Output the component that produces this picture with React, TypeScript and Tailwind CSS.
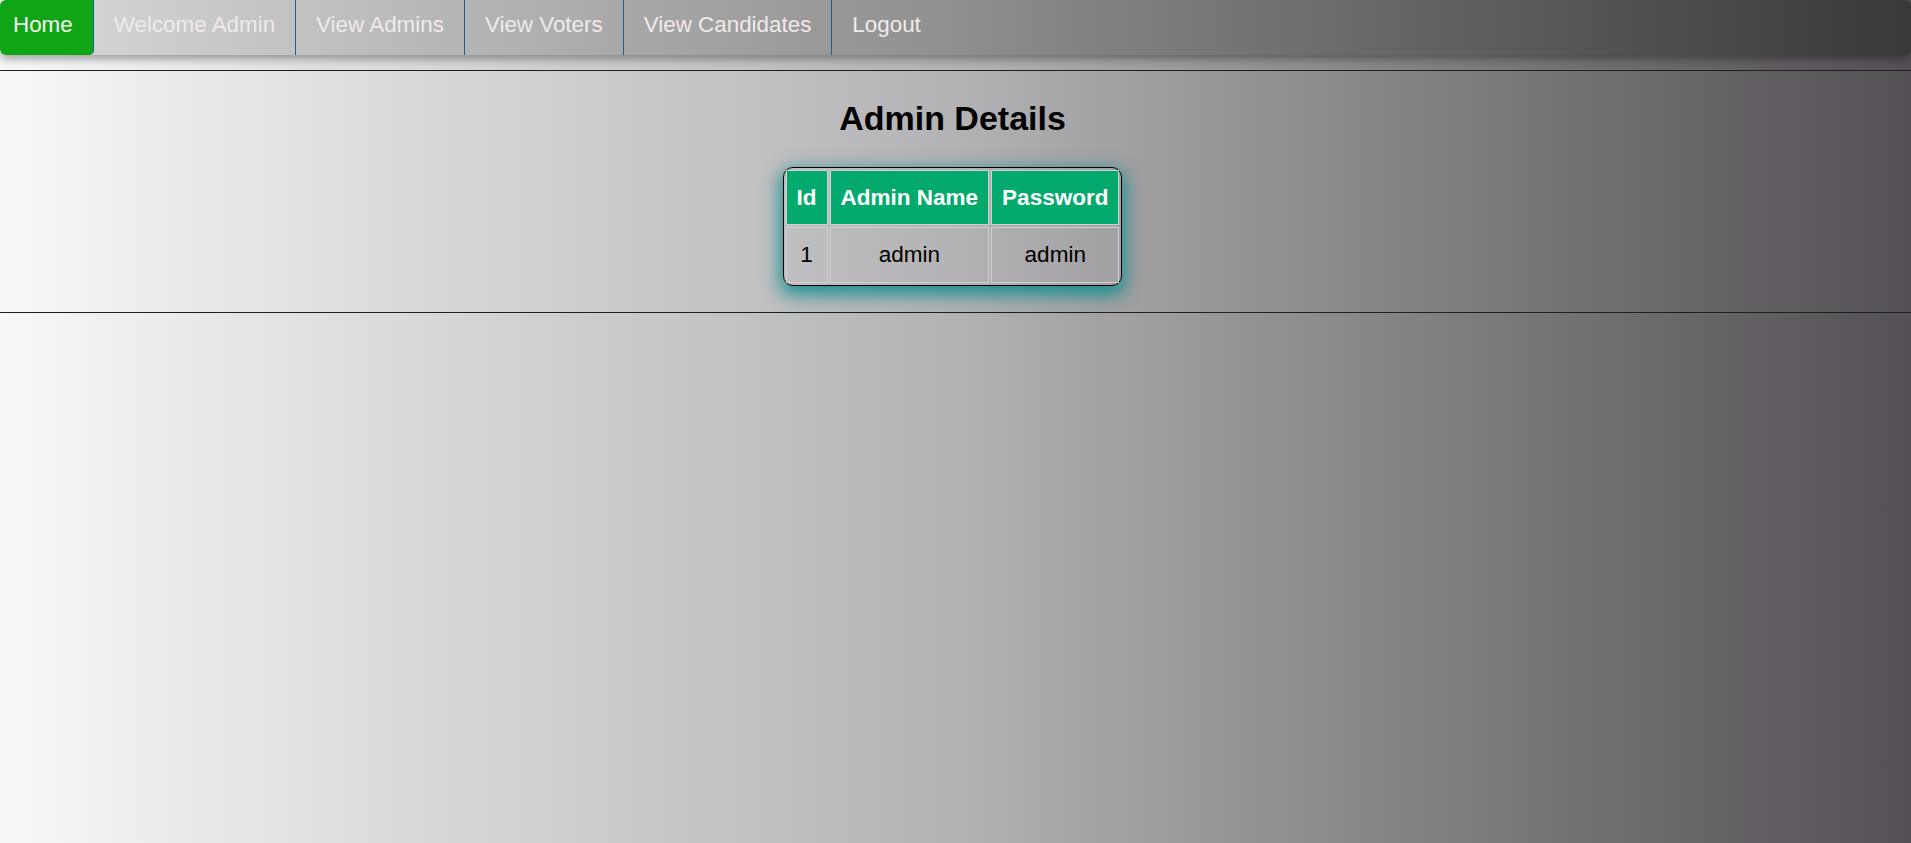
export default function App() {
  const links = ["Welcome Admin", "View Admins", "View Voters", "View Candidates"];

  return (
    <div className="min-h-screen w-full bg-gradient-to-r from-[#f8f8f8] via-[#b3b2b4] to-[#545055] font-['Liberation_Sans',Arial,sans-serif] text-black">
      <nav className="flex h-[55px] overflow-hidden rounded-[6px] bg-gradient-to-r from-[#dadada] via-[#8f8f8f] to-[#3a393a] shadow-[0_4px_9px_rgba(0,0,0,0.35)]">
        <a className="rounded-b-[5px] border-r border-[#17638f] bg-[#10a514] pl-[13px] pr-[20px] pt-[12px] text-[22.4px] leading-[26px] text-[#f4f4f4]">
          Home
        </a>
        {links.map((l) => (
          <a
            key={l}
            className="border-r border-[#17638f] px-[20px] pt-[12px] text-[22.4px] leading-[26px] text-[#f1eaea]"
          >
            {l}
          </a>
        ))}
        <a className="px-[20px] pt-[12px] text-[22.4px] leading-[26px] text-[#f1eaea]">Logout</a>
      </nav>

      <div className="mt-[15px] h-px bg-[#1b211b]" />

      <div className="pr-[6px]">
        <h2 className="mt-[28px] text-center text-[34px] font-bold leading-[38px]">Admin Details</h2>

        <div className="mt-[30px] flex justify-center">
          <table className="border-separate border-spacing-[2px] rounded-[10px] border border-black text-[22.5px] shadow-[0_6px_18px_3px_rgba(0,139,139,0.85)]">
            <thead>
              <tr>
                <th className="border border-[#d0d0d0] bg-[#04aa6d] px-[10px] py-[14px] font-bold leading-[25px] text-white">Id</th>
                <th className="border border-[#d0d0d0] bg-[#04aa6d] px-[10px] py-[14px] font-bold leading-[25px] text-white">Admin Name</th>
                <th className="border border-[#d0d0d0] bg-[#04aa6d] px-[10px] py-[14px] font-bold leading-[25px] text-white">Password</th>
              </tr>
            </thead>
            <tbody>
              <tr>
                <td className="border border-[#d0d0d0] px-[10px] py-[14px] text-center leading-[26px]">1</td>
                <td className="border border-[#d0d0d0] px-[10px] py-[14px] text-center leading-[26px]">admin</td>
                <td className="border border-[#d0d0d0] px-[10px] py-[14px] text-center leading-[26px]">admin</td>
              </tr>
            </tbody>
          </table>
        </div>
      </div>

      <div className="mt-[26px] h-px bg-[#1b211b]" />
    </div>
  );
}
